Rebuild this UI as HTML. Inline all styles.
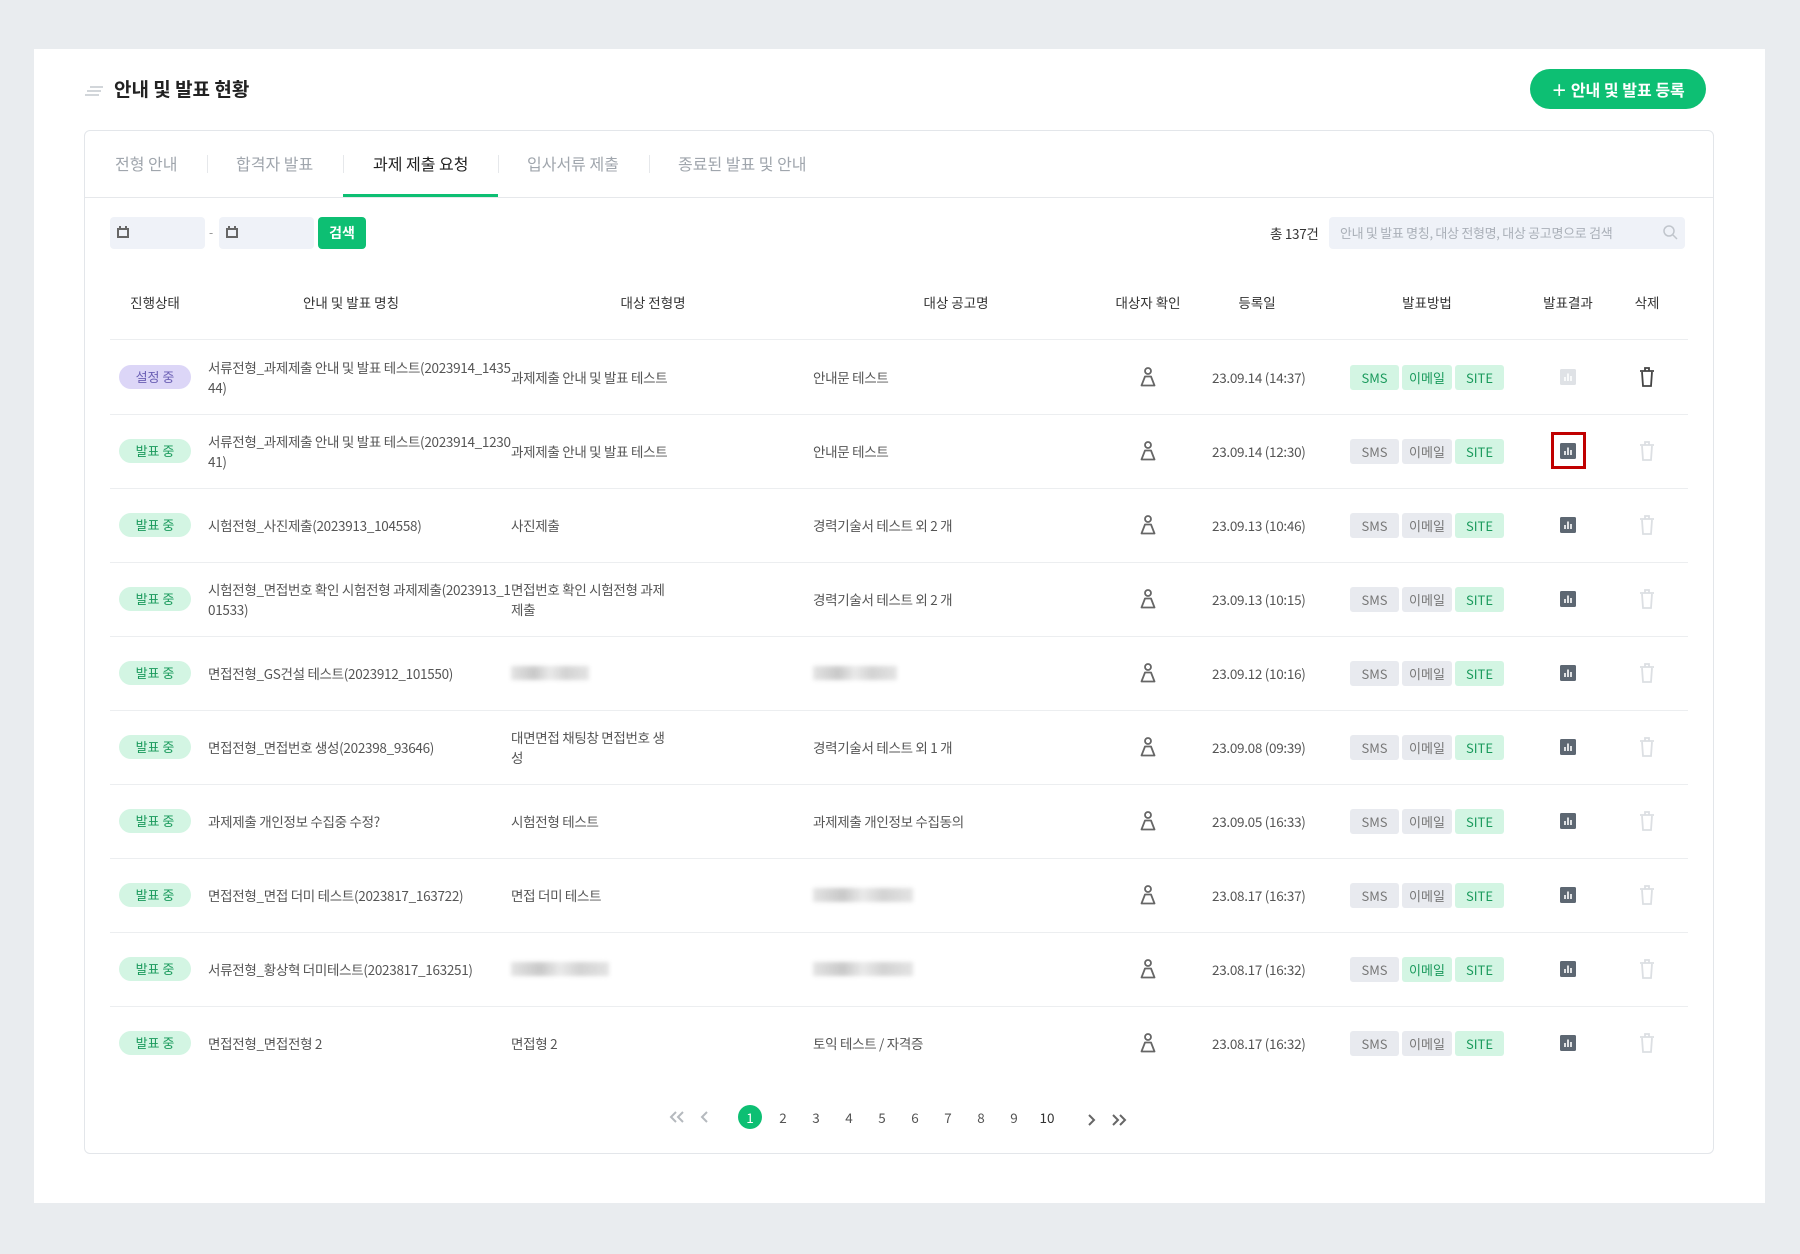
<!DOCTYPE html>
<html><head><meta charset="utf-8">
<style>
*{box-sizing:border-box;margin:0;padding:0}
body{width:1800px;height:1254px;background:#e9ecef;font-family:"Noto Sans CJK KR","Liberation Sans",sans-serif;position:relative;overflow:hidden;color:#555}
.abs{position:absolute}
.panel{left:34px;top:49px;width:1731px;height:1154px;background:#fff}
.card{left:84px;top:130px;width:1630px;height:1024px;border:1px solid #e3e6ea;border-radius:6px;background:#fff}
.tab{top:151px;font-size:16px;color:#a0a6ad;white-space:nowrap}
.sep{top:155px;width:1px;height:18px;background:#e6e8eb}
.hd{top:292px;font-size:13.5px;color:#333;white-space:nowrap;transform:translateX(-50%)}
.line{left:110px;width:1578px;height:1px;background:#eceef0}
.badge{left:119px;width:72px;height:24px;border-radius:12px;font-size:13px;text-align:center;line-height:24px}
.on{background:#d3f5e3;color:#1a9a5c}
.set{background:#dcd6f7;color:#6a5fb4}
.txt{font-size:13.5px;color:#555;line-height:20px;white-space:nowrap;letter-spacing:-0.3px}
.chip{height:25px;border-radius:3px;font-size:13px;text-align:center;line-height:25px}
.g{background:#d3f5e3;color:#1a9a5c}
.n{background:#e8eaef;color:#777}
.blur{height:14px;background:linear-gradient(90deg,#ddd,#bbb 30%,#e5e5e5 50%,#c8c8c8 70%,#ddd);filter:blur(2px);opacity:.8}
.pg{top:1106px;font-size:13.5px;color:#555;width:24px;text-align:center;line-height:22px}
</style></head><body>
<div class="abs panel"></div>
<svg class="abs" style="left:84px;top:85px" width="20" height="12"><path d="M6 2h13M3 6h14M1 10h14" stroke="#c4c8cd" stroke-width="1.6"/></svg>
<div class="abs" style="left:114px;top:75px;font-size:19px;font-weight:bold;color:#222">안내 및 발표 현황</div>
<div class="abs" style="left:1530px;top:69px;width:176px;height:40px;border-radius:20px;background:#0dbf73;color:#fff;font-size:16px;font-weight:bold;line-height:40px;text-align:center">＋ 안내 및 발표 등록</div>
<div class="abs card"></div>
<div class="abs" style="left:85px;top:197px;width:1628px;height:1px;background:#e6e8eb"></div>
<div class="abs tab" style="left:115px">전형 안내</div>
<div class="abs sep" style="left:207px"></div>
<div class="abs tab" style="left:236px">합격자 발표</div>
<div class="abs sep" style="left:343px"></div>
<div class="abs tab" style="left:373px;color:#222">과제 제출 요청</div>
<div class="abs" style="left:343px;top:194px;width:155px;height:3px;background:#0dbf73"></div>
<div class="abs sep" style="left:498px"></div>
<div class="abs tab" style="left:527px">입사서류 제출</div>
<div class="abs sep" style="left:649px"></div>
<div class="abs tab" style="left:678px">종료된 발표 및 안내</div>

<div class="abs" style="left:110px;top:217px;width:95px;height:32px;background:#eff2f8;border-radius:4px"></div>
<div class="abs" style="left:219px;top:217px;width:95px;height:32px;background:#eff2f8;border-radius:4px"></div>
<svg class="abs" style="left:116px;top:225px" width="14" height="14"><rect x="2" y="4" width="10" height="8" fill="none" stroke="#666" stroke-width="2"/><path d="M4 1v4M10 1v4" stroke="#666" stroke-width="2"/></svg>
<svg class="abs" style="left:225px;top:225px" width="14" height="14"><rect x="2" y="4" width="10" height="8" fill="none" stroke="#666" stroke-width="2"/><path d="M4 1v4M10 1v4" stroke="#666" stroke-width="2"/></svg>
<div class="abs" style="left:209px;top:224px;font-size:12px;color:#888">-</div>
<div class="abs" style="left:318px;top:217px;width:48px;height:32px;background:#0dbf73;border-radius:4px;color:#fff;font-size:14px;font-weight:bold;text-align:center;line-height:32px">검색</div>
<div class="abs" style="left:1270px;top:223px;font-size:13.5px;color:#333;letter-spacing:-0.3px">총 137건</div>
<div class="abs" style="left:1329px;top:217px;width:356px;height:32px;background:#eff2f8;border-radius:4px;font-size:13px;color:#aab0b8;line-height:32px;padding-left:11px;letter-spacing:-0.3px">안내 및 발표 명칭, 대상 전형명, 대상 공고명으로 검색</div>
<svg class="abs" style="left:1662px;top:224px" width="18" height="18"><circle cx="7" cy="7" r="5" fill="none" stroke="#c0c5cc" stroke-width="1.5"/><path d="M11 11l4 4" stroke="#c0c5cc" stroke-width="1.5"/></svg>

<div class="abs hd" style="left:155px">진행상태</div>
<div class="abs hd" style="left:351px">안내 및 발표 명칭</div>
<div class="abs hd" style="left:653px">대상 전형명</div>
<div class="abs hd" style="left:956px">대상 공고명</div>
<div class="abs hd" style="left:1148px">대상자 확인</div>
<div class="abs hd" style="left:1257px">등록일</div>
<div class="abs hd" style="left:1427px">발표방법</div>
<div class="abs hd" style="left:1568px">발표결과</div>
<div class="abs hd" style="left:1647px">삭제</div>
<div class="abs line" style="top:339px"></div>

<div id="rows"></div>
<script>
const rows=[
["set","설정 중","서류전형_과제제출 안내 및 발표 테스트(2023914_1435<br>44)","과제제출 안내 및 발표 테스트","안내문 테스트","23.09.14 (14:37)","ggg","light","dark"],
["on","발표 중","서류전형_과제제출 안내 및 발표 테스트(2023914_1230<br>41)","과제제출 안내 및 발표 테스트","안내문 테스트","23.09.14 (12:30)","nng","box","light"],
["on","발표 중","시험전형_사진제출(2023913_104558)","사진제출","경력기술서 테스트 외 2 개","23.09.13 (10:46)","nng","dark","light"],
["on","발표 중","시험전형_면접번호 확인 시험전형 과제제출(2023913_1<br>01533)","면접번호 확인 시험전형 과제<br>제출","경력기술서 테스트 외 2 개","23.09.13 (10:15)","nng","dark","light"],
["on","발표 중","면접전형_GS건설 테스트(2023912_101550)","#b78","#b84","23.09.12 (10:16)","nng","dark","light"],
["on","발표 중","면접전형_면접번호 생성(202398_93646)","대면면접 채팅창 면접번호 생<br>성","경력기술서 테스트 외 1 개","23.09.08 (09:39)","nng","dark","light"],
["on","발표 중","과제제출 개인정보 수집중 수정?","시험전형 테스트","과제제출 개인정보 수집동의","23.09.05 (16:33)","nng","dark","light"],
["on","발표 중","면접전형_면접 더미 테스트(2023817_163722)","면접 더미 테스트","#b100","23.08.17 (16:37)","nng","dark","light"],
["on","발표 중","서류전형_황상혁 더미테스트(2023817_163251)","#b98","#b100","23.08.17 (16:32)","ngg","dark","light"],
["on","발표 중","면접전형_면접전형 2","면접형 2","토익 테스트 / 자격증","23.08.17 (16:32)","nng","dark","light"]];
let h="";
rows.forEach((r,i)=>{
 const c=376.5+74*i;
 h+=`<div class="abs badge ${r[0]}" style="top:${c-12}px">${r[1]}</div>`;
 const two=r[2].includes("<br>");
 h+=`<div class="abs txt" style="left:208px;top:${c-(two?20:10)}px">${r[2]}</div>`;
 const cell=(v,x)=>{ if(v.startsWith("#b")) return `<div class="abs blur" style="left:${x}px;top:${c-7}px;width:${v.slice(2)}px"></div>`;
   const t=v.includes("<br>"); return `<div class="abs txt" style="left:${x}px;top:${c-(t?20:10)}px">${v}</div>`;};
 h+=cell(r[3],511)+cell(r[4],813);
 h+=`<svg class="abs" style="left:1139px;top:${c-11}px" width="18" height="22"><circle cx="9" cy="5" r="3" fill="none" stroke="#666" stroke-width="1.8"/><path d="M6 10.5h6l3.5 9h-13z" fill="none" stroke="#666" stroke-width="1.8" stroke-linejoin="round"/></svg>`;
 h+=`<div class="abs txt" style="left:1212px;top:${c-10}px">${r[5]}</div>`;
 const lab=["SMS","이메일","SITE"],xs=[1350,1402,1455],ws=[49,50,49];
 for(let k=0;k<3;k++) h+=`<div class="abs chip ${r[6][k]=="g"?"g":"n"}" style="left:${xs[k]}px;top:${c-12}px;width:${ws[k]}px">${lab[k]}</div>`;
 const col=r[7]=="light"?"#dfe2e6":"#5d6772";
 h+=`<svg class="abs" style="left:1560px;top:${c-8}px" width="16" height="16"><rect width="16" height="16" rx="1.5" fill="${col}"/><path d="M5 12V8M8 12V4.5M11 12V7" stroke="#fff" stroke-width="1.6"/></svg>`;
 if(r[7]=="box") h+=`<div class="abs" style="left:1551px;top:${c-19}px;width:35px;height:37px;border:3px solid #c00000"></div>`;
 const tc=r[8]=="dark"?"#444":"#dcdfe3";
 h+=`<svg class="abs" style="left:1638px;top:${c-11}px" width="18" height="22"><path d="M2 5h14M7 5V2h4v3M4 6l1 14h8l1-14" fill="none" stroke="${tc}" stroke-width="1.8"/></svg>`;
 if(i<9) h+=`<div class="abs line" style="top:${c+37}px"></div>`;
});
document.getElementById("rows").innerHTML=h;
</script>

<svg class="abs" style="left:668px;top:1109px" width="18" height="16"><path d="M8 3l-5 5 5 5M15 3l-5 5 5 5" fill="none" stroke="#b5b9be" stroke-width="2"/></svg>
<svg class="abs" style="left:699px;top:1109px" width="12" height="16"><path d="M8 3l-5 5 5 5" fill="none" stroke="#b5b9be" stroke-width="2"/></svg>
<div class="abs" style="left:738px;top:1105px;width:24px;height:24px;border-radius:50%;background:#0dbf73"></div>
<div class="abs pg" style="left:738px;color:#fff">1</div>
<div class="abs pg" style="left:771px">2</div>
<div class="abs pg" style="left:804px">3</div>
<div class="abs pg" style="left:837px">4</div>
<div class="abs pg" style="left:870px">5</div>
<div class="abs pg" style="left:903px">6</div>
<div class="abs pg" style="left:936px">7</div>
<div class="abs pg" style="left:969px">8</div>
<div class="abs pg" style="left:1002px">9</div>
<div class="abs pg" style="left:1035px;color:#333">10</div>
<div class="abs" style="left:1085px;top:1109px"><svg width="12" height="16"><path d="M4 3l5 5-5 5" fill="none" stroke="#666" stroke-width="2"/></svg></div>
<div class="abs" style="left:1110px;top:1109px"><svg width="18" height="16"><path d="M3 3l5 5-5 5M10 3l5 5-5 5" fill="none" stroke="#666" stroke-width="2"/></svg></div>
</body></html>
